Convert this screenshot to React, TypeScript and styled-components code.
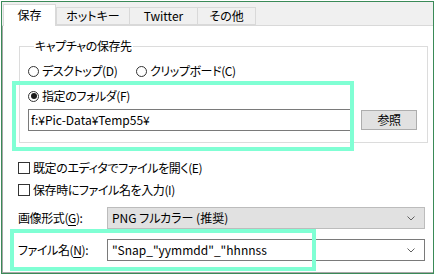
import styled, { createGlobalStyle } from "styled-components";

const GlobalStyle = createGlobalStyle`
  html, body {
    margin: 0;
    padding: 0;
    background: #ffffff;
  }
  body {
    font-family: "Noto Sans CJK JP", "Noto Sans", sans-serif;
    font-size: 12px;
    font-feature-settings: "palt";
    letter-spacing: -0.4px;
    color: #000000;
  }
`;

const Page = styled.div`
  width: 435px;
  height: 275px;
  padding: 1px;
  box-sizing: border-box;
  background: #ffffff;
`;

const Frame = styled.div`
  position: relative;
  width: 433px;
  height: 273px;
  box-sizing: border-box;
  border: 1px solid #3a8a58;
  display: flex;
  flex-direction: column;
  overflow: hidden;
`;

const TabStrip = styled.div`
  height: 24px;
  box-sizing: border-box;
  display: flex;
  align-items: flex-end;
  padding-left: 1px;
  background: #f0f0f0;
  border-bottom: 1px solid #d9d9d9;
`;

const Tab = styled.div<{ $active?: boolean; $w: number }>`
  width: ${(p) => p.$w}px;
  height: ${(p) => (p.$active ? 22 : 18)}px;
  margin-bottom: ${(p) => (p.$active ? -1 : 0)}px;
  margin-right: ${(p) => (p.$active ? 0 : -1)}px;
  box-sizing: border-box;
  display: flex;
  align-items: center;
  justify-content: center;
  padding-bottom: ${(p) => (p.$active ? 2 : 0)}px;
  background: ${(p) => (p.$active ? "#ffffff" : "#f0f0f0")};
  border: 1px solid #d9d9d9;
  border-bottom: ${(p) => (p.$active ? "none" : "1px solid #d9d9d9")};
  line-height: 14px;
  letter-spacing: 0;
  z-index: ${(p) => (p.$active ? 1 : 0)};
`;

const Panel = styled.div`
  flex: 1;
  display: flex;
  flex-direction: column;
  padding: 13px 8px 0 16px;
  border-left: 1px solid #a8a8a8;
  border-bottom: 1px solid #a8a8a8;
`;

const GroupBox = styled.fieldset`
  margin: 0;
  padding: 0 10px 11px 8px;
  border: 1px solid #dcdcdc;
  display: flex;
  flex-direction: column;
`;

const Legend = styled.legend`
  padding: 0 1px;
  margin-left: 6px;
  line-height: 14px;
`;

const Row = styled.div<{ $h?: number; $mt?: number }>`
  display: flex;
  align-items: center;
  height: ${(p) => p.$h ?? 16}px;
  margin-top: ${(p) => p.$mt ?? 0}px;
  line-height: 14px;
  white-space: nowrap;
`;

const Option = styled.label<{ $w?: number }>`
  display: flex;
  align-items: center;
  gap: 3px;
  width: ${(p) => (p.$w ? `${p.$w}px` : "auto")};
`;

const Radio = styled.span<{ $checked?: boolean }>`
  width: 11px;
  height: 11px;
  box-sizing: border-box;
  border: 1px solid #333333;
  border-radius: 50%;
  display: flex;
  align-items: center;
  justify-content: center;
  background: #ffffff;
  &::after {
    content: "";
    width: 6px;
    height: 6px;
    border-radius: 50%;
    background: ${(p) => (p.$checked ? "#1a1a1a" : "transparent")};
  }
`;

const Check = styled.span`
  width: 12px;
  height: 12px;
  box-sizing: border-box;
  border: 1px solid #333333;
  background: #ffffff;
`;

const TextBox = styled.div`
  width: 323px;
  height: 22px;
  box-sizing: border-box;
  border: 1px solid #7a7a7a;
  display: flex;
  align-items: center;
  padding-left: 2px;
  letter-spacing: 0;
`;

const Button = styled.div`
  width: 56px;
  height: 20px;
  margin-left: 10px;
  box-sizing: border-box;
  border: 1px solid #adadad;
  background: #e1e1e1;
  display: flex;
  align-items: center;
  justify-content: center;
`;

const FieldLabel = styled.span`
  width: 89px;
`;

const Key = styled.span`
  text-decoration: underline;
  text-underline-offset: 2px;
`;

const Combo = styled.div<{ $disabled?: boolean }>`
  flex: 1;
  height: 22px;
  box-sizing: border-box;
  display: flex;
  align-items: center;
  justify-content: space-between;
  padding: 0 9px 0 4px;
  letter-spacing: 0;
  background: ${(p) => (p.$disabled ? "#e1e1e1" : "#ffffff")};
  border: 1px solid ${(p) => (p.$disabled ? "#bcbcbc" : "#7a7a7a")};
`;

const FormRow = styled(Row)`
  margin-left: -1px;
`;

const Highlight = styled.div<{ $x: number; $y: number; $w: number; $h: number }>`
  position: absolute;
  left: ${(p) => p.$x}px;
  top: ${(p) => p.$y}px;
  width: ${(p) => p.$w}px;
  height: ${(p) => p.$h}px;
  box-sizing: border-box;
  border: 4px solid #80ffd4;
  pointer-events: none;
`;

const Chevron = () => (
  <svg width="8" height="5" viewBox="0 0 8 5">
    <polyline points="0.5,0.5 4,4 7.5,0.5" fill="none" stroke="#606060" strokeWidth="1" />
  </svg>
);

export default function App() {
  return (
    <Page>
      <GlobalStyle />
      <Frame>
        <TabStrip>
          <Tab $active $w={53}>保存</Tab>
          <Tab $w={74}>ホットキー</Tab>
          <Tab $w={69}>Twitter</Tab>
          <Tab $w={59}>その他</Tab>
        </TabStrip>
        <Panel>
          <GroupBox>
            <Legend>キャプチャの保存先</Legend>
            <Row $mt={10}>
              <Option $w={108}>
                <Radio />
                デスクトップ(D)
              </Option>
              <Option>
                <Radio />
                クリップボード(C)
              </Option>
            </Row>
            <Row $mt={9}>
              <Option>
                <Radio $checked />
                指定のフォルダ(F)
              </Option>
            </Row>
            <Row $h={22} $mt={5}>
              <TextBox>f:¥Pic-Data¥Temp55¥</TextBox>
              <Button>参照</Button>
            </Row>
          </GroupBox>
          <FormRow $mt={17}>
            <Option>
              <Check />
              既定のエディタでファイルを開く(E)
            </Option>
          </FormRow>
          <FormRow $mt={6}>
            <Option>
              <Check />
              保存時にファイル名を入力(I)
            </Option>
          </FormRow>
          <FormRow $h={22} $mt={9}>
            <FieldLabel>
              画像形式(<Key>G</Key>):
            </FieldLabel>
            <Combo $disabled>
              PNG フルカラー (推奨)
              <Chevron />
            </Combo>
          </FormRow>
          <FormRow $h={22} $mt={10}>
            <FieldLabel>
              ファイル名(<Key>N</Key>):
            </FieldLabel>
            <Combo>
              "Snap_"yymmdd"_"hhnnss
              <Chevron />
            </Combo>
          </FormRow>
        </Panel>
        <Highlight $x={10} $y={79} $w={342} $h={70} />
        <Highlight $x={8} $y={227} $w={306} $h={42} />
      </Frame>
    </Page>
  );
}
